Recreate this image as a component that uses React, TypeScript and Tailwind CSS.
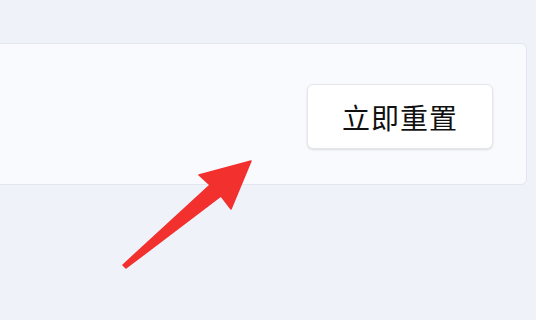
export default function App() {
  return (
    <div
      className="relative w-[536px] h-[320px] overflow-hidden bg-[#eff2f9] pt-[43px] pr-[9px]"
      style={{ fontFamily: '"Noto Sans CJK SC", "Noto Sans", sans-serif' }}
    >
      {/* Settings card, cut off at the left */}
      <div className="ml-[-12px] h-[142px] rounded-md border border-[#e3e6ee] bg-[#f9fafd] flex items-start justify-end pt-[40px] pr-[33px]">
        <button className="w-[186px] h-[65px] rounded-md border border-[#e4e6eb] bg-white shadow-[0_1px_2px_rgba(0,0,0,0.12)] text-[28px] text-[#111111] tracking-[1px]">
          立即重置
        </button>
      </div>

      {/* Red annotation arrow */}
      <svg className="absolute left-0 top-0" width="536" height="320" viewBox="0 0 536 320">
        <polygon
          points="251,161 199,175 210,185 123,265 126,268 221,196 231,209"
          fill="#f2302e"
          stroke="#f2302e"
          strokeWidth="1.5"
          strokeLinejoin="round"
        />
      </svg>
    </div>
  );
}
